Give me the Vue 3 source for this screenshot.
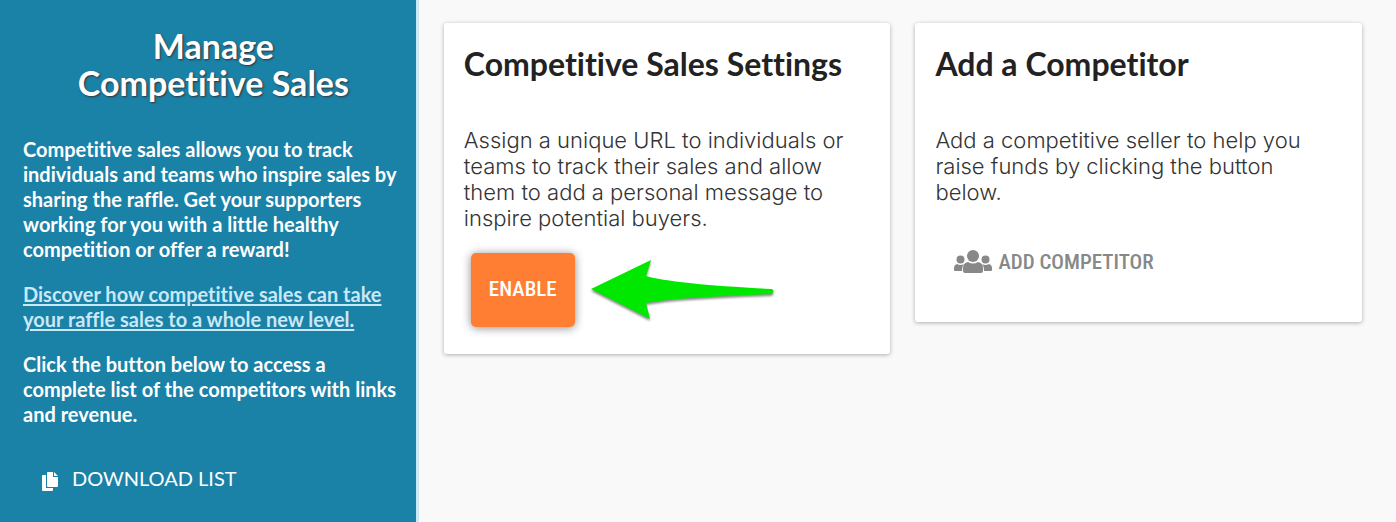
<script setup>
</script>

<template>
  <div class="page">
    <aside class="sidebar">
      <h1>Manage<br />Competitive Sales</h1>
      <p>Competitive sales allows you to track individuals and teams who inspire sales by sharing the raffle. Get your supporters working for you with a little healthy competition or offer a reward!</p>
      <p><a href="#">Discover how competitive sales can take your raffle sales to a whole new level.</a></p>
      <p>Click the button below to access a complete list of the competitors with links and revenue.</p>
      <button type="button" class="download">
        <svg class="copy-icon" viewBox="0 0 16 19" aria-hidden="true">
          <path d="M1 3H4V16H11V18Q11 19 10 19H1Q0 19 0 18V4Q0 3 1 3Z" />
          <path d="M6 0H11V5H16V14Q16 15 15 15H6Q5 15 5 14V1Q5 0 6 0Z" />
          <path d="M12 0L16 4H12Z" />
        </svg>
        <span>DOWNLOAD LIST</span>
      </button>
    </aside>
    <main class="content">
      <section class="card">
        <h2>Competitive Sales Settings</h2>
        <p>Assign a unique URL to individuals or teams to track their sales and allow them to add a personal message to inspire potential buyers.</p>
        <div class="actions raised">
          <button type="button" class="action enable">ENABLE</button>
          <svg class="arrow" viewBox="0 0 186 66" aria-hidden="true">
            <path d="M0 32L60 3L55 19Q82 27 181 32Q184 34 181 37Q86 40 55 46L59 62Z" />
          </svg>
        </div>
      </section>
      <section class="card">
        <h2>Add a Competitor</h2>
        <p>Add a competitive seller to help you raise funds by clicking the button below.</p>
        <div class="actions">
          <button type="button" class="action add">
            <svg class="people-icon" viewBox="0 0 38 24" aria-hidden="true">
              <circle cx="19" cy="6" r="6" />
              <circle cx="6.5" cy="9.5" r="4" />
              <circle cx="31.5" cy="9.5" r="4" />
              <path d="M14 12Q19 15 24 12Q29 13 29 18V21Q29 23 27 23H11Q9 23 9 21V18Q9 13 14 12Z" />
              <path d="M3 14Q6.5 16 10 14Q8 16 8 21H1Q0 21 0 20V18Q0 15 3 14Z" />
              <path d="M35 14Q31.5 16 28 14Q30 16 30 21H37Q38 21 38 20V18Q38 15 35 14Z" />
            </svg>
            <span>ADD COMPETITOR</span>
          </button>
        </div>
      </section>
    </main>
  </div>
</template>

<style>
body {
  background: #f9f9f9;
}
</style>

<style scoped>
.page {
  display: grid;
  grid-template-columns: 30% 1fr;
  min-height: 100vh;
  font-family: Lato, sans-serif;
  font-variant-ligatures: none;
  background: #f9f9f9;
}

.sidebar {
  box-sizing: border-box;
  padding: 27px 12px 24px 23px;
  border-right: 3px solid #c9e8f8;
  background: #1a81a7;
  color: #fff;
}

h1 {
  margin: 0 0 36px;
  font-size: 34px;
  line-height: 37px;
  font-weight: 700;
  text-align: center;
  text-shadow: 1px 1px 2px #333;
}

.sidebar p {
  margin: 0 0 20px;
  font-size: 20px;
  line-height: 25px;
  font-weight: 700;
}

.sidebar a {
  color: #c9e8f8;
  text-underline-offset: 2px;
  text-decoration-thickness: 2px;
}

button {
  border: 0;
  background: none;
  cursor: pointer;
}

.download {
  display: flex;
  align-items: flex-end;
  gap: 14px;
  margin-top: 38px;
  padding: 0 19px;
  color: #fff;
  font: 400 20px/26px Lato, sans-serif;
}

.copy-icon {
  width: 16px;
  height: 19px;
  fill: currentColor;
}

.content {
  display: grid;
  grid-template-columns: 1fr 1fr;
  align-items: start;
  gap: 25px;
  padding: 23px 34px 23px 25px;
}

.card {
  padding: 20px 20px 21px;
  border-radius: 3px;
  background: #fff;
  box-shadow: 0 1px 4px rgba(0, 0, 0, 0.3);
}

h2 {
  margin: 0 0 42px;
  color: #222;
  font-size: 32px;
  line-height: 42px;
  font-weight: 700;
}

.card p {
  margin: 0 0 22px;
  color: #333;
  font: 300 22px/26px Inter, sans-serif;
}

.actions {
  display: flex;
  align-items: center;
  gap: 16px;
  padding-left: 7px;
}

.raised {
  padding-bottom: 6px;
}

.action {
  display: flex;
  align-items: center;
  justify-content: center;
  gap: 6px;
  height: 74px;
  padding: 0 16px 2px;
  font: 500 21px/26px "Roboto Condensed", Roboto, sans-serif;
}

.enable {
  min-width: 104px;
  border-radius: 5px;
  background: #ff7e33;
  color: #fff;
  box-shadow: 0 1px 10px rgba(0, 0, 0, 0.45);
}

.add {
  padding: 0 12px 4px;
  color: #888;
}

.people-icon {
  width: 38px;
  height: 24px;
  fill: currentColor;
}

.arrow {
  width: 186px;
  height: 66px;
  fill: #00e800;
  filter: drop-shadow(0 2px 1px rgba(0, 0, 0, 0.45));
}
</style>
